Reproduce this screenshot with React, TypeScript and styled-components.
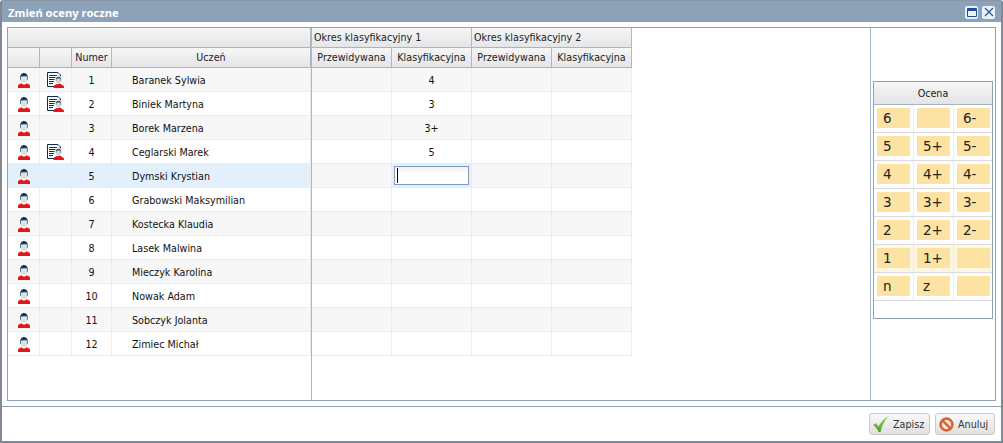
import React, { FC } from "react";
import styled, { createGlobalStyle } from "styled-components";

const GlobalStyle = createGlobalStyle`
    html, body {
        margin: 0;
        padding: 0;
        background: #fff;
    }
    body {
        font-family: "DejaVu Sans", "Noto Sans", sans-serif;
        font-size: 9.6px;
        color: #111;
    }
    * {
        box-sizing: border-box;
    }
`;

const WindowFrame = styled.div`
    width: 1003px;
    height: 443px;
    display: flex;
    flex-direction: column;
    background: #fff;
    border: 2px solid #7f8a96;
    border-top-width: 1px;
    border-top-color: #8a97a6;
    border-radius: 3px 3px 0 0;
`;

const TitleBar = styled.div`
    height: 21px;
    flex: none;
    display: flex;
    align-items: center;
    justify-content: space-between;
    padding: 1px 6px 0 6px;
    background: #8ba2b9;
`;

const Title = styled.div`
    color: #fff;
    font-family: "Noto Sans", sans-serif;
    font-weight: 700;
    font-size: 11.2px;
`;

const TitleButtons = styled.div`
    display: flex;
    gap: 4px;
`;

const TitleButton = styled.div`
    width: 13px;
    height: 13px;
    background: #e9f0f8;
    border-radius: 2px;
    display: flex;
    align-items: center;
    justify-content: center;
`;

const Body = styled.div`
    height: 384px;
    flex: none;
    padding: 5px 5px 5px 5px;
    display: flex;
`;

const Panel = styled.div`
    flex: 1;
    display: grid;
    grid-template-columns: 304px 559px 1fr;
    border: 1px solid #8ba2b9;
`;

const Pane = styled.div<{ $divided?: boolean }>`
    min-width: 0;
    border-right: ${(p) => (p.$divided ? "1px solid #9db8d9" : "none")};
`;

const HeaderBand = styled.div`
    display: flex;
    height: 20px;
`;

const HeaderCell = styled.div<{ $w: number; $left?: boolean }>`
    width: ${(p) => p.$w}px;
    flex: none;
    height: 20px;
    display: flex;
    align-items: center;
    justify-content: ${(p) => (p.$left ? "flex-start" : "center")};
    padding-left: ${(p) => (p.$left ? "2px" : "0")};
    padding-bottom: 1px;
    white-space: nowrap;
    background: linear-gradient(#f6f6f6, #e4e5e7);
    border-right: 1px solid #a9bacb;
    border-bottom: 1px solid #a9b4bf;
    color: #222;
`;

const Row = styled.div<{ $bg: string }>`
    display: flex;
    height: 24px;
    background: ${(p) => p.$bg};
`;

const Cell = styled.div<{ $w: number; $left?: boolean; $bg?: string }>`
    width: ${(p) => p.$w}px;
    flex: none;
    height: 24px;
    display: flex;
    align-items: center;
    justify-content: ${(p) => (p.$left ? "flex-start" : "center")};
    padding-left: ${(p) => (p.$left ? "20px" : "0")};
    padding-top: 1px;
    border-right: 1px solid #ececec;
    border-bottom: 1px solid #ececec;
    background: ${(p) => p.$bg ?? "transparent"};
    white-space: nowrap;
`;

const GradeInput = styled.div`
    width: 75px;
    height: 19px;
    margin-top: -1px;
    border: 1px solid #7f9db9;
    background: linear-gradient(#f1f1f1, #fff 40%);
    padding: 1px 0 1px 2px;
    display: flex;
`;

const Caret = styled.div`
    width: 1px;
    height: 15px;
    background: #000;
`;

const SidePane = styled.div`
    padding: 53px 2px 0 2px;
`;

const GradeBox = styled.div`
    width: 120px;
    height: 238px;
    border: 1px solid #8ba2b9;
`;

const GradeHeader = styled.div`
    height: 23px;
    display: flex;
    align-items: center;
    justify-content: center;
    background: linear-gradient(#f6f6f6, #e3e4e6);
    border-bottom: 1px solid #a9b4bf;
    color: #222;
`;

const GradeRow = styled.div<{ $hover?: boolean }>`
    display: grid;
    grid-template-columns: 40px 40px 1fr;
    height: 28px;
    background: ${(p) => (p.$hover ? "#fdf6e2" : "#fff")};
    border-bottom: 1px solid #dcdcdc;
`;

const GradeCell = styled.div`
    padding: 3px 3px 4px 3px;
    border-right: 1px solid #ececec;
    &:last-child {
        border-right: none;
        padding-right: 2px;
    }
`;

const Chip = styled.div`
    height: 20px;
    background: #fde3a3;
    font-size: 13.5px;
    line-height: 20px;
    padding-left: 6px;
    color: #222;
`;

const Footer = styled.div`
    height: 35px;
    flex: none;
    border-top: 1px solid #8ba2b9;
    display: flex;
    align-items: center;
    justify-content: flex-end;
    gap: 5px;
    padding: 0 6px 0 0;
`;

const Button = styled.div<{ $w: number }>`
    width: ${(p) => p.$w}px;
    height: 22px;
    display: flex;
    align-items: center;
    gap: 4px;
    padding: 0 0 0 3px;
    border: 1px solid #c9c9c9;
    border-radius: 3px;
    background: linear-gradient(#f9f9f9, #e0e0e0);
    color: #333;
`;

const UserIcon: FC = () => (
    <svg width="12" height="15" viewBox="0 0 12 15">
        <path d="M0 15v-2.500C1 11 2.500 10.500 4 10l2 1 2-1c1.500.5 3 1 4 2.500V15z" fill="#e8141c" />
        <path d="M3.500 9.500h5v1.200l-2.500 1-2.500-1z" fill="#f4f4f4" />
        <ellipse cx="6" cy="5.500" rx="3.500" ry="4.500" fill="#e0e0e0" />
        <path d="M2.200 6.500C1.700 2 3.800 0 6 0s4.300 2 3.800 6.500l-.6 1V3.800C8 3 4 3 2.800 3.800v3.700z" fill="#0f3a5a" />
    </svg>
);

const NoteIcon: FC = () => (
    <svg width="17" height="16" viewBox="0 0 17 16">
        <path d="M.5.500h10.500l2.500 2.500v11.500H.5z" fill="#fff" stroke="#0a2f55" />
        <path d="M2 3.500h8M2 5.500h8M2 7.500h5.500M2 9.500h5M2 11.500h4" stroke="#0a2f55" />
        <ellipse cx="11.500" cy="8" rx="3.600" ry="4.200" fill="#fff" />
        <path d="M6.500 16v-1.500c.7-1.500 2-2 3.500-2.500h3c1.500.5 3 1 4 2.500V16z" fill="#e8141c" />
        <ellipse cx="11.500" cy="8.500" rx="2.700" ry="3.300" fill="#d4d4d4" />
        <path d="M8.700 8.500C8.500 5.500 10 4.500 11.500 4.500s3 1 2.800 4l-.6.500V7c-1-.6-3.400-.6-4.400 0v2z" fill="#2f5673" />
    </svg>
);

const CheckIcon: FC = () => (
    <svg width="16" height="18" viewBox="0 0 16 18">
        <defs>
            <linearGradient id="checkFill" x1="0" y1="0" x2="0" y2="1">
                <stop offset="0" stopColor="#a6d86a" />
                <stop offset="1" stopColor="#4f9e2a" />
            </linearGradient>
        </defs>
        <path d="M0 10l3-2 2.500 3.500C8 7 11 3 16 1c-4 4-7 9-8.500 16H5.500C4.500 14 2.500 12 0 10z" fill="url(#checkFill)" />
    </svg>
);

const CancelIcon: FC = () => (
    <svg width="15" height="15" viewBox="0 0 16 16">
        <circle cx="8" cy="8" r="6.300" fill="#fbeee8" stroke="#e0602f" strokeWidth="2.800" />
        <path d="M3.800 3.800l8.400 8.400" stroke="#e0602f" strokeWidth="2.800" />
    </svg>
);

const students = [
    { nr: 1, name: "Baranek Sylwia", note: true, grade: "4" },
    { nr: 2, name: "Biniek Martyna", note: true, grade: "3" },
    { nr: 3, name: "Borek Marzena", note: false, grade: "3+" },
    { nr: 4, name: "Ceglarski Marek", note: true, grade: "5" },
    { nr: 5, name: "Dymski Krystian", note: false, grade: "" },
    { nr: 6, name: "Grabowski Maksymilian", note: false, grade: "" },
    { nr: 7, name: "Kostecka Klaudia", note: false, grade: "" },
    { nr: 8, name: "Lasek Malwina", note: false, grade: "" },
    { nr: 9, name: "Mieczyk Karolina", note: false, grade: "" },
    { nr: 10, name: "Nowak Adam", note: false, grade: "" },
    { nr: 11, name: "Sobczyk Jolanta", note: false, grade: "" },
    { nr: 12, name: "Zimiec Michał", note: false, grade: "" },
];

const grades = [
    ["6", "", "6-"],
    ["5", "5+", "5-"],
    ["4", "4+", "4-"],
    ["3", "3+", "3-"],
    ["2", "2+", "2-"],
    ["1", "1+", ""],
    ["n", "z", ""],
];

const SELECTED = 5;
const stripe = (nr: number) => (nr % 2 === 1 ? "#f7f7f7" : "#fff");

const App: FC = () => (
    <>
        <GlobalStyle />
        <WindowFrame>
            <TitleBar>
                <Title>Zmień oceny roczne</Title>
                <TitleButtons>
                    <TitleButton>
                        <svg width="10" height="9" viewBox="0 0 10 9">
                            <path d="M.5.500h9v8h-9z" fill="none" stroke="#1f4e96" />
                            <path d="M0 1h10v2H0z" fill="#1f4e96" />
                        </svg>
                    </TitleButton>
                    <TitleButton>
                        <svg width="10" height="10" viewBox="0 0 10 10">
                            <path d="M1 1l8 8M9 1l-8 8" stroke="#2c5c9c" strokeWidth="1.300" />
                        </svg>
                    </TitleButton>
                </TitleButtons>
            </TitleBar>
            <Body>
                <Panel>
                    <Pane $divided>
                        <HeaderBand>
                            <HeaderCell $w={303} />
                        </HeaderBand>
                        <HeaderBand>
                            <HeaderCell $w={32} />
                            <HeaderCell $w={32} />
                            <HeaderCell $w={40}>Numer</HeaderCell>
                            <HeaderCell $w={199}>Uczeń</HeaderCell>
                        </HeaderBand>
                        {students.map((s) => (
                            <Row key={s.nr} $bg={s.nr === SELECTED ? "#e3f0fb" : stripe(s.nr)}>
                                <Cell $w={32}>
                                    <UserIcon />
                                </Cell>
                                <Cell $w={32}>{s.note && <NoteIcon />}</Cell>
                                <Cell $w={40}>{s.nr}</Cell>
                                <Cell $w={199} $left>
                                    {s.name}
                                </Cell>
                            </Row>
                        ))}
                    </Pane>
                    <Pane $divided>
                        <HeaderBand>
                            <HeaderCell $w={160} $left>Okres klasyfikacyjny 1</HeaderCell>
                            <HeaderCell $w={160} $left>Okres klasyfikacyjny 2</HeaderCell>
                        </HeaderBand>
                        <HeaderBand>
                            <HeaderCell $w={80}>Przewidywana</HeaderCell>
                            <HeaderCell $w={80}>Klasyfikacyjna</HeaderCell>
                            <HeaderCell $w={80}>Przewidywana</HeaderCell>
                            <HeaderCell $w={80}>Klasyfikacyjna</HeaderCell>
                        </HeaderBand>
                        {students.map((s) => (
                            <Row key={s.nr} $bg="transparent">
                                <Cell $w={80} $bg={stripe(s.nr)} />
                                <Cell $w={80} $bg={s.nr === SELECTED ? "#e3f0fb" : stripe(s.nr)}>
                                    {s.nr === SELECTED ? (
                                        <GradeInput>
                                            <Caret />
                                        </GradeInput>
                                    ) : (
                                        s.grade
                                    )}
                                </Cell>
                                <Cell $w={80} $bg={stripe(s.nr)} />
                                <Cell $w={80} $bg={stripe(s.nr)} />
                            </Row>
                        ))}
                    </Pane>
                    <SidePane>
                        <GradeBox>
                            <GradeHeader>Ocena</GradeHeader>
                            {grades.map((row) => (
                                <GradeRow key={row[0]} $hover={row[0] === "1"}>
                                    {row.map((g, i) => (
                                        <GradeCell key={i}>
                                            <Chip>{g}</Chip>
                                        </GradeCell>
                                    ))}
                                </GradeRow>
                            ))}
                        </GradeBox>
                    </SidePane>
                </Panel>
            </Body>
            <Footer>
                <Button $w={61}>
                    <CheckIcon />
                    Zapisz
                </Button>
                <Button $w={60}>
                    <CancelIcon />
                    Anuluj
                </Button>
            </Footer>
        </WindowFrame>
    </>
);

export default App;
